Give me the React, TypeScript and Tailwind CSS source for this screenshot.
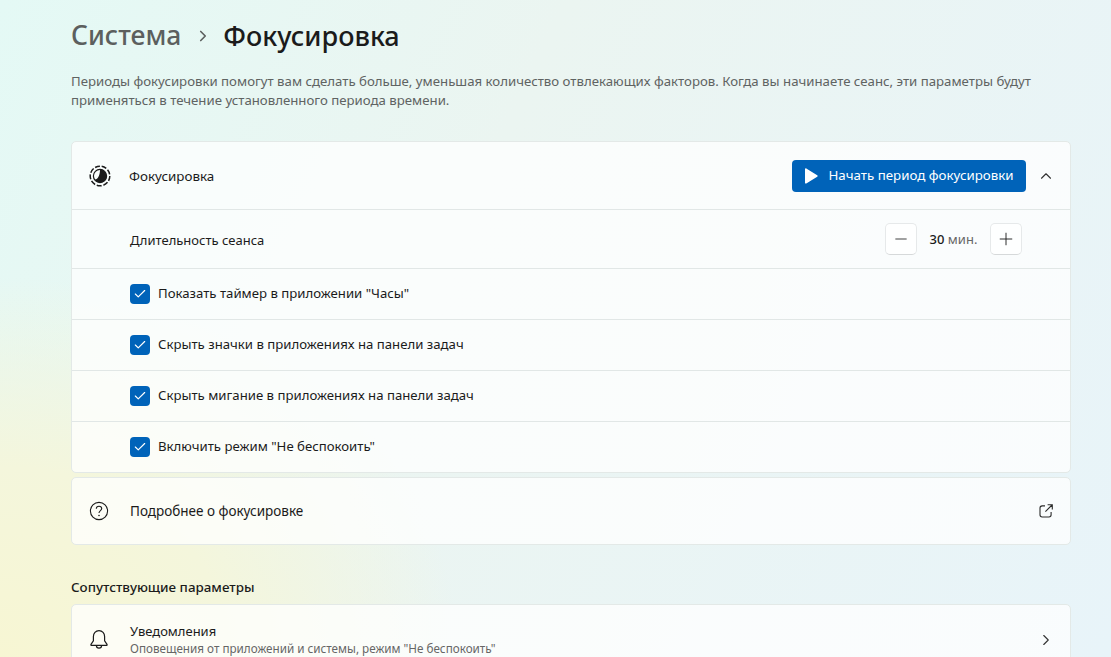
import { Check, ChevronRight, ChevronUp, Minus, Plus } from 'lucide-react';

const font = 'font-["Noto_Sans",sans-serif]';

const options = [
  'Показать таймер в приложении "Часы"',
  'Скрыть значки в приложениях на панели задач',
  'Скрыть мигание в приложениях на панели задач',
  'Включить режим "Не беспокоить"',
];

function FocusIcon() {
  return (
    <svg width="22" height="22" viewBox="0 0 22 22" fill="none">
      <circle cx="11" cy="11" r="9.8" stroke="#1b1b1b" strokeWidth="1.5" strokeDasharray="5 1.8" />
      <circle cx="11" cy="11" r="6.6" stroke="#1b1b1b" strokeWidth="1.2" />
      <path d="M11 4.4A6.6 6.6 0 1 1 5.4 14.5C8.5 14.5 11 11 11 4.4Z" fill="#1b1b1b" />
    </svg>
  );
}

function HelpIcon() {
  return (
    <svg width="20" height="20" viewBox="0 0 20 20" fill="none" stroke="#1b1b1b">
      <circle cx="10" cy="10" r="8.6" strokeWidth="1.1" />
      <path d="M7.3 7.8C7.3 6.2 8.5 5.2 10 5.2c1.5 0 2.7 1 2.7 2.4 0 2-2.7 2-2.7 4.4" strokeWidth="1.1" />
      <circle cx="10" cy="14.5" r="0.8" fill="#1b1b1b" stroke="none" />
    </svg>
  );
}

function BellIcon() {
  return (
    <svg width="20" height="22" viewBox="0 0 20 22" fill="none" stroke="#1b1b1b" strokeWidth="1.2">
      <path d="M10 1.6c-3.4 0-5.6 2.6-5.6 5.8v4.4L2 15.4c-.3.5 0 1 .6 1h14.8c.6 0 .9-.5.6-1l-2.4-3.6V7.4c0-3.2-2.2-5.8-5.6-5.8Z" />
      <path d="M7.4 16.6c0 1.5 1.1 2.6 2.6 2.6s2.6-1.1 2.6-2.6" />
    </svg>
  );
}

function OpenIcon() {
  return (
    <svg width="14" height="14" viewBox="0 0 14 14" fill="none" stroke="#2a2a2a" strokeWidth="1.1">
      <path d="M6 1.9H3.2C2 1.9 1 2.9 1 4.1v6.7C1 12 2 13 3.2 13h6.7c1.2 0 2.2-1 2.2-2.2V8" />
      <path d="M6.4 7.6 13 1M8.6.7h4.7v4.7" />
    </svg>
  );
}

function PlayIcon() {
  return (
    <svg width="14" height="16" viewBox="0 0 14 16">
      <path d="M1 1.2C1 .5 1.7.1 2.3.5l10.9 6.7c.6.4.6 1.2 0 1.6L2.3 15.5c-.6.4-1.3 0-1.3-.7V1.2Z" fill="white" />
    </svg>
  );
}

function Stepper({ children }: { children: React.ReactNode }) {
  return (
    <button className="flex h-[32px] w-[32px] items-center justify-center rounded-[5px] border border-[#e6e9ea] border-b-[#d6d9da] bg-white/90 text-[#1b1b1b]">
      {children}
    </button>
  );
}

export default function App() {
  return (
    <div
      className={`${font} h-[657px] w-[1111px] overflow-hidden bg-[radial-gradient(ellipse_460px_380px_at_0px_657px,#f7f6d3_0%,#f4f6dc_50%,rgba(243,245,220,0)_100%),linear-gradient(115deg,#e4f9f5_0%,#ebf5f1_40%,#e8f4f9_100%)] pl-[71px] pr-[40px] text-[#1b1b1b]`}
    >
      <div className="flex h-[71px] items-center text-[27px] leading-none font-medium">
        <span className="text-[26.5px] text-[#5c5f5e]">Система</span>
        <ChevronRight className="mr-[11px] ml-[13px] h-[18px] w-[18px] text-[#5c5f5e]" strokeWidth={2.2} />
        <span>Фокусировка</span>
      </div>

      <p className="h-[70px] pt-[1px] text-[13.22px] leading-[19px] text-[#5f6362]">
        Периоды фокусировки помогут вам сделать больше, уменьшая количество отвлекающих факторов. Когда вы начинаете сеанс, эти параметры будут применяться в течение установленного периода времени.
      </p>

      <div className="overflow-hidden rounded-[5px] border border-[#e3e9e7] bg-white/75 text-[13.3px]">
        <div className="flex h-[68px] items-center border-b border-[#e1e7e6] pr-[15px] pl-[17px]">
          <FocusIcon />
          <span className="ml-[18px] flex-1 pt-[2px] text-[13.4px]">Фокусировка</span>
          <button className="flex h-[32px] w-[234px] items-center justify-center gap-[10px] rounded-[4px] bg-[#0063b9] text-white">
            <PlayIcon />
            <span>Начать период фокусировки</span>
          </button>
          <ChevronUp className="ml-[11px] h-[18px] w-[18px] text-[#333]" strokeWidth={1.5} />
        </div>

        <div className="flex h-[59px] items-center border-b border-[#e1e7e6] pr-[48px] pl-[58px]">
          <span className="flex-1 pt-[3px] text-[13px]">Длительность сеанса</span>
          <Stepper>
            <Minus className="h-[18px] w-[18px]" strokeWidth={1.1} />
          </Stepper>
          <span className="mx-[12px] w-[49px] pt-[1px] text-center text-[13px]">
            <span className="font-medium">30</span> <span className="text-[#666]">мин.</span>
          </span>
          <Stepper>
            <Plus className="h-[20px] w-[20px]" strokeWidth={1.1} />
          </Stepper>
        </div>

        {options.map((label, i) => (
          <div
            key={label}
            className={`flex items-center pl-[58px] ${i < options.length - 1 ? 'h-[51px] border-b border-[#e1e7e6]' : 'h-[50px]'}`}
          >
            <span className="flex h-[20px] w-[20px] items-center justify-center rounded-[4px] bg-[#0063b9]">
              <Check className="h-[14px] w-[14px] text-white" strokeWidth={2} />
            </span>
            <span className="ml-[8px] pb-[1px] text-[13.2px]">{label}</span>
          </div>
        ))}
      </div>

      <div className="mt-[4px] flex h-[68px] items-center rounded-[5px] border border-[#e3e9e7] bg-white/75 pr-[17px] pl-[17px] text-[13.5px]">
        <HelpIcon />
        <span className="ml-[21px] flex-1">Подробнее о фокусировке</span>
        <OpenIcon />
      </div>

      <h2 className="mt-[33px] h-[26px] text-[13.4px] leading-[19px] font-medium">Сопутствующие параметры</h2>

      <div className="flex h-[68px] rounded-t-[5px] border border-[#e3e9e7] bg-white/75 pt-[17px] pr-[15px] pl-[17px]">
        <div className="pt-[7px]">
          <BellIcon />
        </div>
        <div className="ml-[21px] flex-1">
          <div className="text-[13px] leading-[18px]">Уведомления</div>
          <div className="text-[11.7px] leading-[16px] text-[#666]">Оповещения от приложений и системы, режим "Не беспокоить"</div>
        </div>
        <ChevronRight className="mt-[9px] h-[18px] w-[18px] text-[#333]" strokeWidth={1.5} />
      </div>
    </div>
  );
}
